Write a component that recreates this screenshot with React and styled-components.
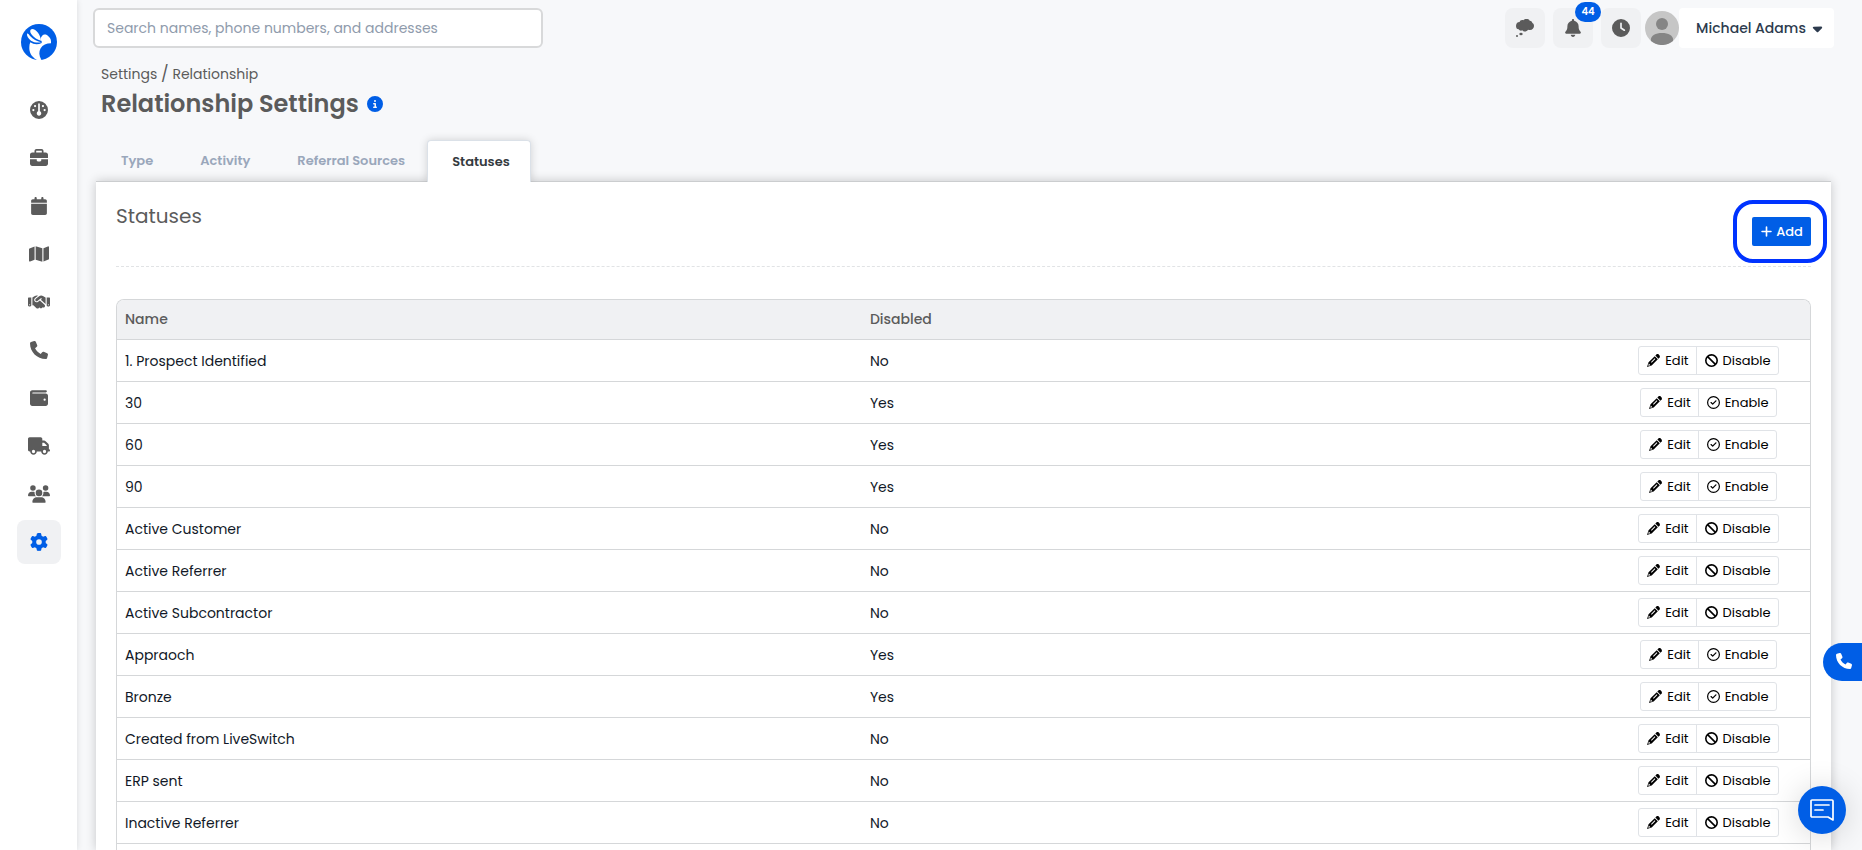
import { useState } from "react";
import styled, { createGlobalStyle, css } from "styled-components";
import {
	FaBan,
	FaBell,
	FaBriefcase,
	FaCalendar,
	FaCaretDown,
	FaCircleInfo,
	FaClock,
	FaGauge,
	FaGear,
	FaHandshake,
	FaMap,
	FaPhone,
	FaPlus,
	FaRegCircleCheck,
	FaTruck,
	FaUsers,
	FaWallet,
} from "react-icons/fa6";

const navItems = [
	{ label: "Dashboard", icon: FaGauge, size: 18 },
	{ label: "Jobs", icon: FaBriefcase, size: 18 },
	{ label: "Calendar", icon: FaCalendar, size: 18 },
	{ label: "Map", icon: FaMap, size: 20 },
	{ label: "Relationships", icon: FaHandshake, size: 22 },
	{ label: "Calls", icon: FaPhone, size: 18 },
	{ label: "Payments", icon: FaWallet, size: 18 },
	{ label: "Dispatch", icon: FaTruck, size: 22 },
	{ label: "Team", icon: FaUsers, size: 22 },
	{ label: "Settings", icon: FaGear, size: 18, active: true },
];

const tabs = ["Type", "Activity", "Referral Sources", "Statuses"];

const statuses = [
	{ name: "1. Prospect Identified", disabled: false },
	{ name: "30", disabled: true },
	{ name: "60", disabled: true },
	{ name: "90", disabled: true },
	{ name: "Active Customer", disabled: false },
	{ name: "Active Referrer", disabled: false },
	{ name: "Active Subcontractor", disabled: false },
	{ name: "Appraoch", disabled: true },
	{ name: "Bronze", disabled: true },
	{ name: "Created from LiveSwitch", disabled: false },
	{ name: "ERP sent", disabled: false },
	{ name: "Inactive Referrer", disabled: false },
];

const Logo = () => (
	<svg width="36" height="36" viewBox="0 0 108 108" aria-hidden="true">
		<circle cx="54" cy="54" r="54" fill="#005ee6" />
		<g fill="#fff">
			<path d="M29 17c5-5 15 0 22 9 6 8 8 15 9 24-11-3-21-9-27-17-5-6-7-12-4-16z" />
			<path d="M18 29c3-1 6 3 10 8 8 9 19 14 32 18-11 2-22 0-30-5-8-6-13-15-12-21z" />
			<path d="M62 52c-5-4-3-11 1-16 5-6 14-6 19 1 7 5 9 12 8 21-14 0-25 5-31 15-6 10-5 23 2 34-5 1-10 1-15 0-15-9-22-22-21-37 0-6 1-11 3-15 10 7 23 8 34 2z" />
		</g>
	</svg>
);

const ThoughtIcon = () => (
	<svg width="18" height="18" viewBox="0 0 54 54" fill="currentColor" aria-hidden="true">
		<path d="M11 9c1-5 6-7 11-5 4-6 16-6 19 1 5 0 8 3 8 7 4 2 5 5 5 9 0 7-5 12-12 12-2 0-4 0-6-1-3 6-13 8-17 2-4 2-9 1-11-3C3 31 0 27 0 21 0 14 4 9 11 9z" />
		<ellipse cx="15" cy="45" rx="5" ry="4" />
		<circle cx="3" cy="51" r="3" />
	</svg>
);

const PencilIcon = () => (
	<svg width="13" height="13" viewBox="0 0 42 42" fill="currentColor" aria-hidden="true">
		<path d="M27 5l4-4c2-1 5-1 7 1l2 2c2 2 2 5 1 7l-4 4z" />
		<path
			fillRule="evenodd"
			d="M25 7l10 10-20 20L0 42l5-15zM6 31l-2 7 7-2zM25 14L13 26l2 2 12-12z"
		/>
	</svg>
);

const ChatIcon = () => (
	<svg
		width="24"
		height="24"
		viewBox="0 0 24 24"
		fill="none"
		stroke="#fff"
		strokeWidth="1.7"
		strokeLinejoin="round"
		strokeLinecap="round"
		aria-hidden="true"
	>
		<path d="M2 2h20a1 1 0 0 1 1 1v19l-5-3H2a1 1 0 0 1-1-1V3a1 1 0 0 1 1-1z" />
		<path d="M5 7h14M5 12h8" />
	</svg>
);

const StatusRow = ({ status }) => (
	<tr>
		<Cell>{status.name}</Cell>
		<Cell>{status.disabled ? "Yes" : "No"}</Cell>
		<ActionCell>
			<ButtonGroup>
				<SmallButton type="button">
					<PencilIcon />
					Edit
				</SmallButton>
				<SmallButton type="button">
					{status.disabled ? <FaRegCircleCheck size={13} /> : <FaBan size={13} />}
					{status.disabled ? "Enable" : "Disable"}
				</SmallButton>
			</ButtonGroup>
		</ActionCell>
	</tr>
);

const App = () => {
	const [activeTab, setActiveTab] = useState("Statuses");

	return (
		<Layout>
			<GlobalStyle />
			<Sidebar>
				<LogoLink href="#" aria-label="Home">
					<Logo />
				</LogoLink>
				<Nav>
					{navItems.map(({ label, icon: Icon, size, active }) => (
						<NavLink key={label} href="#" aria-label={label} $active={active}>
							<Icon size={size} />
						</NavLink>
					))}
				</Nav>
			</Sidebar>
			<Main>
				<TopBar>
					<SearchInput
						type="search"
						aria-label="Search"
						placeholder="Search names, phone numbers, and addresses"
					/>
					<TopActions>
						<IconButton type="button" aria-label="Messages">
							<ThoughtIcon />
						</IconButton>
						<IconButton type="button" aria-label="Notifications">
							<FaBell size={18} />
							<Badge>44</Badge>
						</IconButton>
						<IconButton type="button" aria-label="Time clock">
							<FaClock size={18} />
						</IconButton>
						<UserBox>
							<Avatar viewBox="0 0 34 34" aria-hidden="true">
								<circle cx="17" cy="17" r="17" fill="#c6c6c6" />
								<circle cx="17" cy="13" r="6" fill="#858585" />
								<path d="M6 30c-1-5 4-8 11-8s12 3 11 8a17 17 0 0 1-22 0z" fill="#858585" />
							</Avatar>
							<UserButton type="button">
								Michael Adams
								<FaCaretDown size={15} />
							</UserButton>
						</UserBox>
					</TopActions>
				</TopBar>
				<PageHeader>
					<Breadcrumb aria-label="Breadcrumb">
						<a href="#">Settings</a> <Slash>/</Slash> <a href="#">Relationship</a>
					</Breadcrumb>
					<TitleRow>
						<Title>Relationship Settings</Title>
						<FaCircleInfo size={16} color="#005ee6" />
					</TitleRow>
				</PageHeader>
				<Tabs role="tablist">
					{tabs.map((tab) => (
						<Tab
							key={tab}
							type="button"
							role="tab"
							aria-selected={tab === activeTab}
							$active={tab === activeTab}
							onClick={() => setActiveTab(tab)}
						>
							{tab}
						</Tab>
					))}
				</Tabs>
				<Panel>
					<PanelHeader>
						<PanelTitle>Statuses</PanelTitle>
						<AddWrapper>
							<AddButton type="button">
								<FaPlus size={13} />
								Add
							</AddButton>
						</AddWrapper>
					</PanelHeader>
					<TableWrapper>
						<Table>
							<thead>
								<tr>
									<HeadCell $width="44%">Name</HeadCell>
									<HeadCell $width="44%">Disabled</HeadCell>
									<HeadCell $width="12%" aria-label="Actions" />
								</tr>
							</thead>
							<tbody>
								{statuses.map((status) => (
									<StatusRow key={status.name} status={status} />
								))}
							</tbody>
						</Table>
					</TableWrapper>
				</Panel>
			</Main>
			<CallButton type="button" aria-label="Call">
				<FaPhone size={16} />
			</CallButton>
			<ChatButton type="button" aria-label="Chat">
				<ChatIcon />
			</ChatButton>
		</Layout>
	);
};

export default App;

const GlobalStyle = createGlobalStyle`
	* {
		box-sizing: border-box;
	}

	body {
		margin: 0;
		background: #f7f8fa;
		color: #5b5b5b;
		font-family: Poppins, Inter, sans-serif;
		font-size: 14px;
		line-height: 20px;
	}

	button, input {
		font: inherit;
	}

	button {
		cursor: pointer;
	}

	a {
		color: inherit;
		text-decoration: none;
	}
`;

const Layout = styled.div`
	display: flex;
	height: 100vh;
	overflow: hidden;
`;

const Sidebar = styled.aside`
	display: flex;
	flex-direction: column;
	align-items: center;
	flex: none;
	width: 77px;
	padding-top: 24px;
	background: #fff;
	box-shadow: 0 0 6px rgba(0, 0, 0, 0.12);
`;

const LogoLink = styled.a`
	display: flex;
`;

const Nav = styled.nav`
	display: flex;
	flex-direction: column;
	gap: 4px;
	margin-top: 28px;
`;

const NavLink = styled.a`
	display: flex;
	align-items: center;
	justify-content: center;
	width: 44px;
	height: 44px;
	border-radius: 8px;
	color: ${({ $active }) => ($active ? "#005ee6" : "#5b5b5b")};
	background: ${({ $active }) => ($active ? "#f0f1f3" : "transparent")};
`;

const Main = styled.main`
	display: flex;
	flex-direction: column;
	flex: 1;
	min-width: 0;
	padding: 8px 31px 0 19px;
`;

const TopBar = styled.header`
	display: flex;
	justify-content: space-between;
	align-items: center;
	margin: 0 -3px;
`;

const SearchInput = styled.input`
	width: 450px;
	height: 40px;
	padding: 0 12px;
	border: 2px solid #d8d9da;
	border-radius: 6px;
	background: #fff;
	color: #334155;
	outline: none;

	&::placeholder {
		color: #8f9bac;
		opacity: 1;
	}
`;

const TopActions = styled.div`
	display: flex;
	align-items: center;
	gap: 8px;
`;

const IconButton = styled.button`
	position: relative;
	display: flex;
	align-items: center;
	justify-content: center;
	width: 40px;
	height: 40px;
	padding: 0;
	border: none;
	border-radius: 8px;
	background: #f0f1f3;
	color: #5b5b5b;
`;

const Badge = styled.span`
	position: absolute;
	top: -6px;
	right: -8px;
	width: 26px;
	border-radius: 10px;
	background: #005ee6;
	color: #fff;
	font-size: 10px;
	font-weight: 600;
	line-height: 20px;
`;

const UserBox = styled.div`
	display: flex;
	align-items: center;
	margin-left: -4px;
`;

const Avatar = styled.svg`
	width: 34px;
	height: 34px;
`;

const UserButton = styled.button`
	display: flex;
	align-items: center;
	justify-content: center;
	gap: 4px;
	min-width: 155px;
	height: 40px;
	padding: 0 8px 0 16px;
	border: none;
	border-radius: 4px;
	background: #fff;
	color: #2d3b4e;
	font-weight: 500;
`;

const PageHeader = styled.div`
	padding: 16px 5px 0;
`;

const Breadcrumb = styled.nav`
	line-height: 20px;
`;

const Slash = styled.span`
	font-size: 16px;
`;

const TitleRow = styled.div`
	display: flex;
	align-items: center;
	gap: 8px;
	height: 40px;
`;

const Title = styled.h1`
	margin: 0;
	font-size: 24px;
	font-weight: 600;
	line-height: 32px;
`;

const Tabs = styled.div`
	display: flex;
	gap: 1px;
	margin-top: 16px;
`;

const Tab = styled.button`
	height: 41px;
	padding: 0 20px 0 24px;
	border: 1px solid transparent;
	border-bottom: none;
	border-radius: 4px 4px 0 0;
	background: transparent;
	color: #9aa7bb;
	font-size: 13px;
	font-weight: 600;

	/* the open tab covers the panel edge, its shadow stops there */
	${({ $active }) =>
		$active &&
		css`
			position: relative;
			height: 42px;
			margin-bottom: -1px;
			border-color: #dbe1e8;
			background: #fff;
			color: #343a40;
			box-shadow: 0 0 8px rgba(0, 0, 0, 0.16);
			clip-path: inset(-12px -12px 0 -12px);
		`}
`;

const Panel = styled.section`
	display: flex;
	flex-direction: column;
	flex: 1;
	padding: 0 20px;
	border-top: 1px solid #cbcdcf;
	background: #fff;
	box-shadow: 0 0 10px rgba(0, 0, 0, 0.2);
`;

const PanelHeader = styled.div`
	display: flex;
	justify-content: space-between;
	align-items: flex-start;
	height: 85px;
	padding-top: 20px;
	border-bottom: 1px dashed #e1e3e5;
`;

const PanelTitle = styled.h2`
	margin: 0;
	font-size: 20px;
	font-weight: 400;
	line-height: 28px;
`;

const AddWrapper = styled.div`
	position: relative;
	margin-top: 15px;

	&::after {
		content: "";
		position: absolute;
		inset: -17px -16px -17px -19px;
		border: 4px solid #0033ff;
		border-radius: 20px;
		pointer-events: none;
	}
`;

const AddButton = styled.button`
	display: flex;
	align-items: center;
	justify-content: center;
	gap: 3px;
	min-width: 59px;
	height: 29px;
	padding: 0 8px;
	border: none;
	border-radius: 2px;
	background: #005ee6;
	color: #fff;
	font-size: 13px;
	font-weight: 500;
`;

const TableWrapper = styled.div`
	flex: 1;
	margin-top: 32px;
	border: 1px solid #d5d7d9;
	border-bottom: none;
	border-radius: 8px 8px 0 0;
	overflow: hidden;
`;

const Table = styled.table`
	width: 100%;
	table-layout: fixed;
	border-spacing: 0;
	color: #111827;
`;

const HeadCell = styled.th`
	width: ${({ $width }) => $width};
	height: 40px;
	padding: 0 8px 2px;
	border-bottom: 1px solid #d5d7d9;
	background: #f0f1f3;
	color: #5b5b5b;
	font-weight: 500;
	text-align: left;
`;

const Cell = styled.td`
	height: 42px;
	padding: 0 8px;
	border-bottom: 1px solid #d5d7d9;
`;

const ActionCell = styled(Cell)`
	text-align: center;
`;

const ButtonGroup = styled.div`
	display: inline-flex;
	vertical-align: middle;
	border: 1px solid #e0e3e7;
	border-radius: 3px;
`;

const SmallButton = styled.button`
	display: flex;
	align-items: center;
	gap: 5px;
	height: 27px;
	padding: 0 7px 0 8px;
	border: none;
	background: transparent;
	color: #000;
	font-size: 13px;

	& + & {
		border-left: 1px solid #e0e3e7;
	}
`;

const CallButton = styled.button`
	position: fixed;
	top: 643px;
	right: 0;
	display: flex;
	align-items: center;
	width: 39px;
	height: 38px;
	padding: 0 0 2px 13px;
	border: none;
	border-radius: 19px 0 0 19px;
	background: #005ee6;
	color: #fff;
`;

const ChatButton = styled.button`
	position: fixed;
	right: 16px;
	bottom: 16px;
	display: flex;
	align-items: center;
	justify-content: center;
	width: 48px;
	height: 48px;
	padding: 0;
	border: none;
	border-radius: 50%;
	background: #005ee6;
	box-shadow: 0 2px 32px rgba(0, 0, 0, 0.16);
`;
